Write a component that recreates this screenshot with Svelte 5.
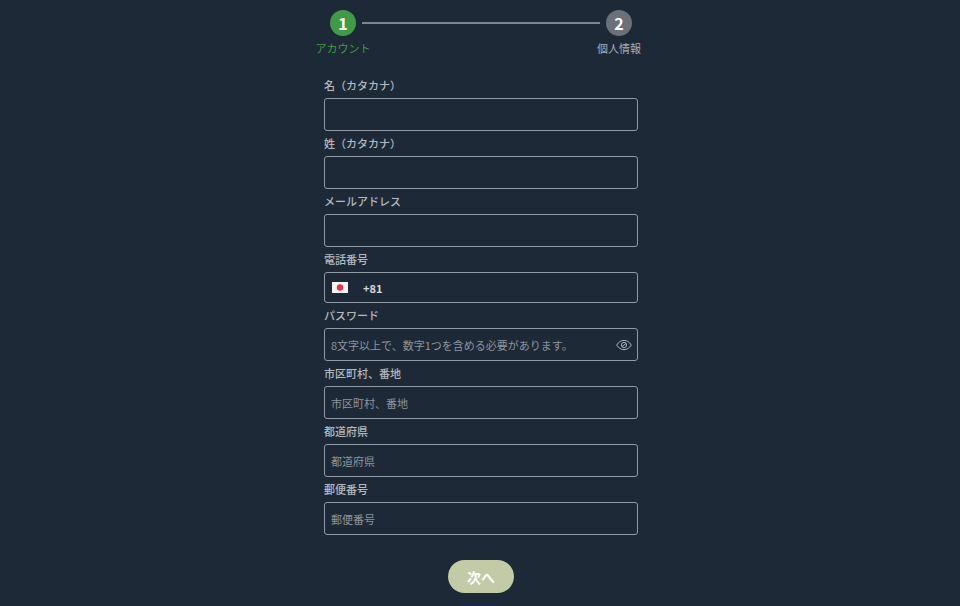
<script lang="ts">
  interface Field {
    label: string
    placeholder?: string
    kind?: 'phone' | 'password'
  }

  const fields: Field[] = [
    { label: '名（カタカナ）' },
    { label: '姓（カタカナ）' },
    { label: 'メールアドレス' },
    { label: '電話番号', kind: 'phone' },
    { label: 'パスワード', placeholder: '8文字以上で、数字1つを含める必要があります。', kind: 'password' },
    { label: '市区町村、番地', placeholder: '市区町村、番地' },
    { label: '都道府県', placeholder: '都道府県' },
    { label: '郵便番号', placeholder: '郵便番号' },
  ]
</script>

<div class="page">
  <div class="stepper">
    <div class="step active">
      <span class="dot">1</span>
      <span class="step-label">アカウント</span>
    </div>
    <div class="line"></div>
    <div class="step">
      <span class="dot">2</span>
      <span class="step-label">個人情報</span>
    </div>
  </div>

  <form class="form">
    {#each fields as f}
      <div class="field" class:phone={f.kind === 'phone'}>
        <label for={f.label}>{f.label}</label>
        <div class="box">
          {#if f.kind === 'phone'}
            <svg class="flag" viewBox="0 0 16 11" width="16" height="11" aria-hidden="true">
              <rect width="16" height="11" fill="#f4f2f2" />
              <circle cx="8" cy="5.5" r="3.2" fill="#e8304a" />
            </svg>
            <span class="code">+81</span>
          {/if}
          <input id={f.label} placeholder={f.placeholder ?? ''} />
          {#if f.kind === 'password'}
            <svg class="eye" viewBox="0 0 16 12" width="16" height="12" fill="none" stroke="#a9b0b8" stroke-width="1" aria-hidden="true">
              <path d="M0.7 6C2.6 2.9 5 1.4 8 1.4S13.4 2.9 15.3 6C13.4 9.1 11 10.6 8 10.6S2.6 9.1 0.7 6Z" />
              <circle cx="8" cy="6" r="2.6" />
              <path d="M5.9 7.6L10.1 4.4" />
            </svg>
          {/if}
        </div>
      </div>
    {/each}
  </form>

  <button class="next" type="button">次へ</button>
</div>

<style>
  :global(body) {
    margin: 0;
    background: #1e2937;
  }

  .page {
    height: 606px;
    overflow: hidden;
    display: flex;
    flex-direction: column;
    align-items: center;
    background: #1e2937;
    font-family: 'Noto Sans CJK JP', 'Noto Sans', sans-serif;
  }

  .stepper {
    width: 330px;
    margin-top: 10px;
    margin-left: 2px;
    display: flex;
    align-items: flex-start;
  }

  .step {
    width: 54px;
    display: flex;
    flex-direction: column;
    align-items: center;
    gap: 4px;
  }

  .dot {
    width: 26px;
    height: 26px;
    border-radius: 50%;
    background: #6b7079;
    color: #fff;
    font-size: 16px;
    font-weight: 700;
    line-height: 26px;
    text-align: center;
  }

  .step-label {
    font-size: 11px;
    line-height: 16px;
    white-space: nowrap;
    color: #a9b0b8;
  }

  .active .dot {
    background: #3f9b45;
  }

  .active .step-label {
    color: #3f9b45;
  }

  .line {
    flex: 1;
    height: 2px;
    margin: 12px -8px 0;
    background: #7d8690;
  }

  .form {
    width: 314px;
    margin-top: 17px;
    margin-left: 2px;
    display: flex;
    flex-direction: column;
  }

  .field {
    height: 58px;
    display: flex;
    flex-direction: column;
  }

  .field.phone {
    height: 56px;
  }

  label {
    height: 25px;
    font-size: 11px;
    font-weight: 500;
    line-height: 25px;
    color: #b4b9bf;
  }

  .box {
    height: 33px;
    box-sizing: border-box;
    display: flex;
    align-items: center;
    padding: 0 5px 0 6px;
    border: 1px solid #8f9aa6;
    border-radius: 3px;
  }

  .phone .box {
    height: 31px;
    padding-left: 7px;
  }

  .flag {
    flex-shrink: 0;
  }

  .code {
    margin-left: 15px;
    font-size: 11px;
    font-weight: 700;
    color: #d6d9dc;
  }

  input {
    flex: 1;
    min-width: 0;
    padding: 0;
    border: 0;
    outline: 0;
    background: transparent;
    font: inherit;
    font-size: 11px;
    color: #d6d9dc;
  }

  input::placeholder {
    color: #8d949c;
    opacity: 1;
  }

  .eye {
    flex-shrink: 0;
  }

  .next {
    width: 66px;
    height: 33px;
    margin-top: 25px;
    margin-left: 2px;
    border: 0;
    border-radius: 17px;
    background: #c2cba5;
    color: #fff;
    font: inherit;
    font-size: 14px;
    font-weight: 700;
  }
</style>
